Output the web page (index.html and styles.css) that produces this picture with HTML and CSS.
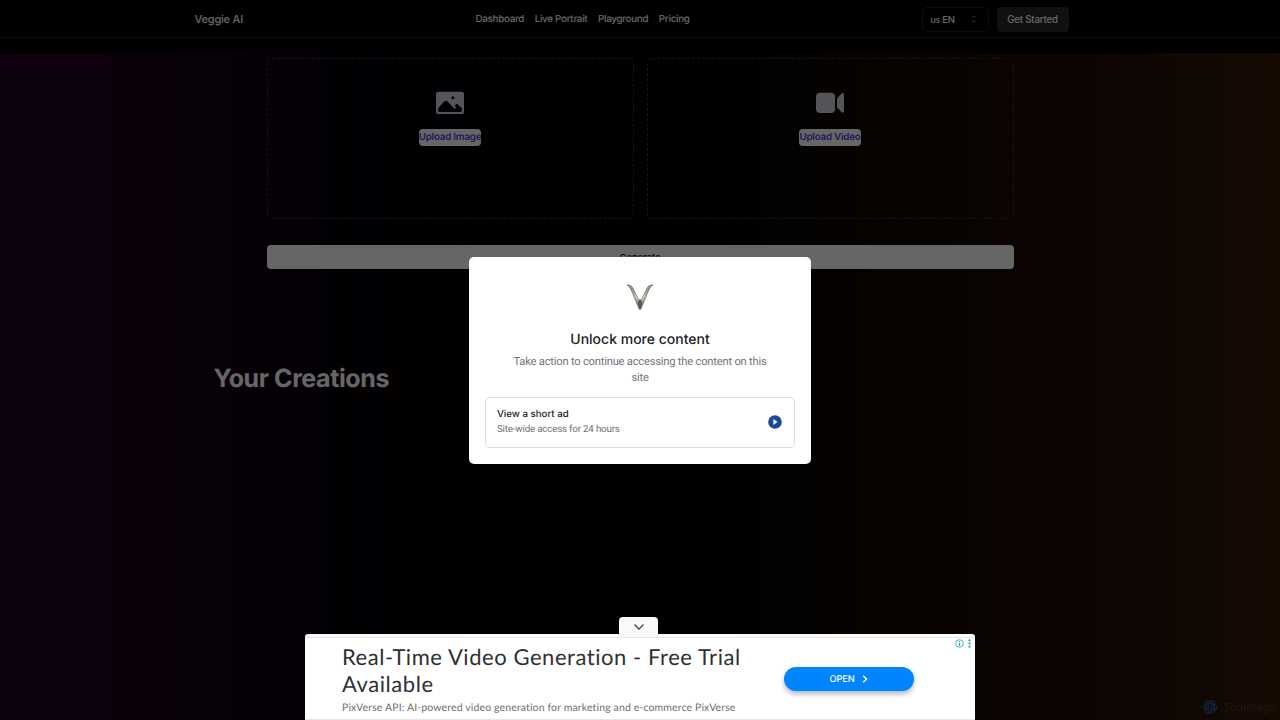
FILE: index.html
```html
<!DOCTYPE html>
<html lang="en">
<head>
    <meta charset="UTF-8">
    <meta name="viewport" content="width=device-width, initial-scale=1.0">
    <title>Veggie AI</title>
    <link rel="stylesheet" href="styles.css">
</head>
<body>

<header class="header">
    <div class="header-inner">
        <a class="brand">Veggie AI</a>
        <nav class="nav">
            <a>Dashboard</a>
            <a>Live Portrait</a>
            <a>Playground</a>
            <a>Pricing</a>
        </nav>
        <div class="header-actions">
            <button class="lang">
                <span><span class="flag">us</span> EN</span>
                <svg width="10" height="10" viewBox="0 0 24 24" fill="none" stroke="currentColor" stroke-width="2"><path d="m7 15 5 5 5-5M7 9l5-5 5 5"/></svg>
            </button>
            <button class="get-started">Get Started</button>
        </div>
    </div>
</header>

<main class="page">
    <div class="studio">
        <div class="uploads">
            <div class="upload-box">
                <svg class="upload-icon" viewBox="0 0 24 24" fill="currentColor"><path fill-rule="evenodd" d="M0 4.5A2.2 2.2 0 0 1 2.2 2.3h19.6A2.2 2.2 0 0 1 24 4.5v14.8a2.2 2.2 0 0 1-2.2 2.2H2.2A2.2 2.2 0 0 1 0 19.3zM1.8 16.6v2.1c0 .6.4 1 1 1h18.4c.6 0 1-.4 1-1v-2.1l-3.1-3.1a1.6 1.6 0 0 0-2.3 0l-.8.8.8 1a.9.9 0 0 1-1.3 1.3l-5.9-6a1.6 1.6 0 0 0-2.3 0zM13.2 7.5a1.3 1.3 0 1 0 2.6 0 1.3 1.3 0 1 0-2.6 0z"/></svg>
                <label class="upload-label">Upload Image</label>
            </div>
            <div class="upload-box">
                <svg class="upload-icon" viewBox="0 0 24 24" fill="currentColor"><rect y="3.2" width="16.3" height="17.4" rx="3.4"/><path d="M18 8.2v7.4l3.900 4.300c.8.8 2.100.3 2.100-.8V4.700c0-1.100-1.300-1.600-2.100-.8z"/></svg>
                <label class="upload-label">Upload Video</label>
            </div>
        </div>
        <button class="generate">Generate</button>
    </div>
    <h2 class="creations-title">Your Creations</h2>
</main>

<div class="overlay">
    <div class="dialog">
        <svg class="dialog-logo" viewBox="0 0 28 28">
            <defs>
                <linearGradient id="metal" x1="0" y1="0" x2="0" y2="1">
                    <stop offset="0" stop-color="#8b8a83"/>
                    <stop offset="0.5" stop-color="#f0eee2"/>
                    <stop offset="1" stop-color="#49453c"/>
                </linearGradient>
            </defs>
            <path d="M1 2.2c3-.3 4.7.3 6.2 3.5L14 20 20.800 5.700C22.300 2.500 24 1.900 27 2.200c-2.300.7-3 2-4 4.300L15 25.500c-.5 1.200-1.500 1.200-2 0L5 6.500C4 4.200 3.300 2.900 1 2.200z" fill="url(#metal)" stroke="#5a5851" stroke-width=".7"/>
            <path d="M5.500 5 13.500 24M22.500 5 14.500 24" fill="none" stroke="#55524a" stroke-width=".4"/>
            <path d="M14 15.500 12 20l2 5 2-5z" fill="#5b5243"/>
        </svg>
        <h3 class="dialog-title">Unlock more content</h3>
        <p class="dialog-text">Take action to continue accessing the content on this site</p>
        <div class="option">
            <div>
                <div class="option-title">View a short ad</div>
                <div class="option-text">Site-wide access for 24 hours</div>
            </div>
            <svg width="14" height="14" viewBox="0 0 14 14"><circle cx="7" cy="7" r="6.800" fill="#1a4b9b"/><path d="M5.400 4v6l4-3z" fill="#fff"/></svg>
        </div>
    </div>
</div>

<div class="ad">
    <div class="ad-toggle">
        <svg width="12" height="8" viewBox="0 0 12 8" fill="none" stroke="#444" stroke-width="1.3"><path d="m1.5 1.500 4.500 4.500 4.500-4.500"/></svg>
    </div>
    <div class="ad-body">
        <div class="ad-copy">
            <div class="ad-title">Real-Time Video Generation - Free Trial<br>Available</div>
            <div class="ad-text">PixVerse API: AI-powered video generation for marketing and e-commerce PixVerse</div>
        </div>
        <a class="ad-open">
            <span>OPEN</span>
            <svg width="6" height="8" viewBox="0 0 6 8" fill="none" stroke="#fff" stroke-width="1.5"><path d="m1.200.8 3.300 3.200-3.300 3.200"/></svg>
        </a>
        <div class="ad-info">
            <svg width="9" height="9" viewBox="0 0 9 9" fill="none" stroke="#1a9fbf" stroke-width=".8"><circle cx="4.5" cy="4.5" r="3.8"/><path d="M4.500 3.900V7M4.500 2v1.100" stroke-width="1.1"/></svg>
            <svg width="3" height="9" viewBox="0 0 3 9" fill="#1a9fbf"><circle cx="1.5" cy="1.3" r="1.1"/><circle cx="1.5" cy="4.5" r="1.1"/><circle cx="1.5" cy="7.7" r="1.1"/></svg>
        </div>
    </div>
</div>

<div class="badge">
    <svg width="16" height="16" viewBox="0 0 16 16" fill="none" stroke="#12213f" stroke-width="1.2">
        <ellipse cx="8" cy="8" rx="7" ry="3.6"/>
        <ellipse cx="8" cy="8" rx="7" ry="3.6" transform="rotate(60 8 8)"/>
        <ellipse cx="8" cy="8" rx="7" ry="3.6" transform="rotate(120 8 8)"/>
        <circle cx="8" cy="8" r="2"/>
    </svg>
    <span>ToolMage</span>
</div>

</body>
</html>
```
FILE: styles.css
```css
* {
    box-sizing: border-box;
}
body {
    margin: 0;
    height: 720px;
    overflow: hidden;
    background-color: #000;
    font-family: Inter, sans-serif;
    text-rendering: geometricPrecision;
    color: #fff;
}
button {
    font-family: inherit;
    border: none;
    padding: 0;
}
.header {
    height: 38px;
    border-bottom: 1px solid #202022;
}
.header-inner {
    width: 874px;
    height: 38px;
    margin-left: 194.5px;
    display: grid;
    grid-template-columns: 281px 1fr auto;
    align-items: center;
}
.brand {
    font-size: 11px;
    letter-spacing: -0.2px;
    font-weight: 500;
}
.nav {
    display: flex;
    gap: 10.6px;
    font-size: 9.8px;
    letter-spacing: -0.28px;
    font-weight: 500;
}
.header-actions {
    display: flex;
    gap: 8px;
}
.lang {
    width: 67px;
    height: 25px;
    padding: 0 9px 0 8px;
    display: flex;
    align-items: center;
    justify-content: space-between;
    background: none;
    border: 1px solid #202022;
    border-radius: 4px;
    color: #fff;
    font-size: 9.6px;
    letter-spacing: -0.15px;
    font-weight: 500;
}
.lang svg {
    color: #999;
}
.flag {
    font-family: Lato, sans-serif;
}
.get-started {
    width: 72px;
    height: 25px;
    border-radius: 4px;
    background-color: #29292b;
    color: #fff;
    font-size: 9.7px;
    letter-spacing: -0.18px;
    font-weight: 500;
}
.page {
    height: 667px;
    margin-top: 15px;
    padding-top: 5px;
    background: linear-gradient(90deg, #26052a 0, #1c0319 140px, #0b0210 280px, #050107 420px, #000 560px, #000 690px, #0a0500 780px, #140904 940px, #1e0c07 1020px, #250f08 1140px, #381c08 1280px);
}
.studio {
    width: 747px;
    margin: 0 auto;
}
.uploads {
    display: grid;
    grid-template-columns: 1fr 1fr;
    gap: 13px;
}
.upload-box {
    height: 161px;
    padding-top: 30px;
    display: flex;
    flex-direction: column;
    align-items: center;
    border: 1px dashed #30343b;
    border-radius: 5px;
}
.upload-icon {
    width: 28px;
    height: 28px;
    color: #d1d5db;
}
.upload-label {
    margin-top: 12px;
    height: 17px;
    line-height: 18px;
    border-radius: 4px;
    background-color: #fff;
    color: #4f46e5;
    font-size: 9.8px;
    letter-spacing: -0.22px;
    font-weight: 600;
}
.generate {
    display: block;
    width: 100%;
    height: 24px;
    margin-top: 26px;
    border-radius: 4px;
    background-color: #fff;
    color: #18181b;
    font-size: 9.33px;
    font-weight: 500;
}
.creations-title {
    margin: 94px 0 0 213.5px;
    font-size: 25px;
    line-height: 32px;
    letter-spacing: -0.4px;
    font-weight: 750;
}
.overlay {
    position: fixed;
    inset: 0;
    display: flex;
    align-items: center;
    justify-content: center;
    background-color: rgba(0, 0, 0, 0.6);
}
.dialog {
    width: 342px;
    height: 207px;
    padding: 26px 16px 16px;
    display: flex;
    flex-direction: column;
    align-items: center;
    border-radius: 5px;
    background-color: #fff;
    font-family: Roboto, sans-serif;
}
.dialog-logo {
    width: 28px;
    height: 28px;
}
.dialog-title {
    margin: 19px 0 0;
    font-family: Inter, sans-serif;
    font-size: 14px;
    line-height: 20px;
    font-weight: 500;
    color: #202124;
}
.dialog-text {
    width: 270px;
    margin: 4px 0 11px;
    text-align: center;
    font-size: 11.2px;
    line-height: 16px;
    letter-spacing: -0.22px;
    color: #70757a;
}
.option {
    width: 100%;
    height: 51px;
    padding: 1px 12px 0 11px;
    display: flex;
    align-items: center;
    justify-content: space-between;
    border: 1px solid #dadce0;
    border-radius: 5px;
}
.option svg {
    margin-bottom: 1px;
}
.option-title {
    font-family: Inter, sans-serif;
    font-size: 9.7px;
    line-height: 15px;
    font-weight: 500;
    color: #202124;
}
.option-text {
    font-size: 9.8px;
    line-height: 16px;
    letter-spacing: -0.2px;
    color: #70757a;
}
.ad {
    position: fixed;
    left: 305px;
    bottom: 0;
    width: 670px;
}
.ad-toggle {
    width: 39px;
    height: 17px;
    margin-left: 314px;
    padding-top: 2px;
    display: flex;
    align-items: center;
    justify-content: center;
    border-radius: 4px 4px 0 0;
    background-color: #fafafa;
}
.ad-body {
    position: relative;
    height: 86px;
    padding-left: 37px;
    display: flex;
    border-radius: 3px 3px 0 0;
    background: linear-gradient(#fafafa 3px, #e6e6e6 3px, #e6e6e6 4px, #fff 4px, #fff 85px, #e6e6e6 85px);
}
.ad-copy {
    width: 442px;
    padding-top: 9px;
    white-space: nowrap;
    font-family: Lato, sans-serif;
    font-variant-ligatures: none;
}
.ad-title {
    font-size: 22px;
    line-height: 27px;
    letter-spacing: 0.55px;
    color: #303134;
}
.ad-text {
    margin-top: 4px;
    font-size: 10.5px;
    line-height: 14px;
    letter-spacing: 0.13px;
    color: #707070;
}
.ad-open {
    width: 130px;
    height: 24px;
    margin-top: 33px;
    display: flex;
    align-items: center;
    justify-content: center;
    gap: 8px;
    border-radius: 12px;
    background-color: #0085ff;
    box-shadow: 0 3px 5px rgba(40, 50, 90, 0.35);
    color: #fff;
    font-size: 9.3px;
    letter-spacing: -0.2px;
    font-weight: 500;
}
.ad-info {
    position: absolute;
    top: 5px;
    right: 4px;
    display: flex;
    gap: 4px;
}
.badge {
    position: fixed;
    right: 4px;
    bottom: 5px;
    display: flex;
    align-items: center;
    gap: 5px;
    font-size: 11px;
    font-weight: 600;
    color: #1f130c;
}
```
